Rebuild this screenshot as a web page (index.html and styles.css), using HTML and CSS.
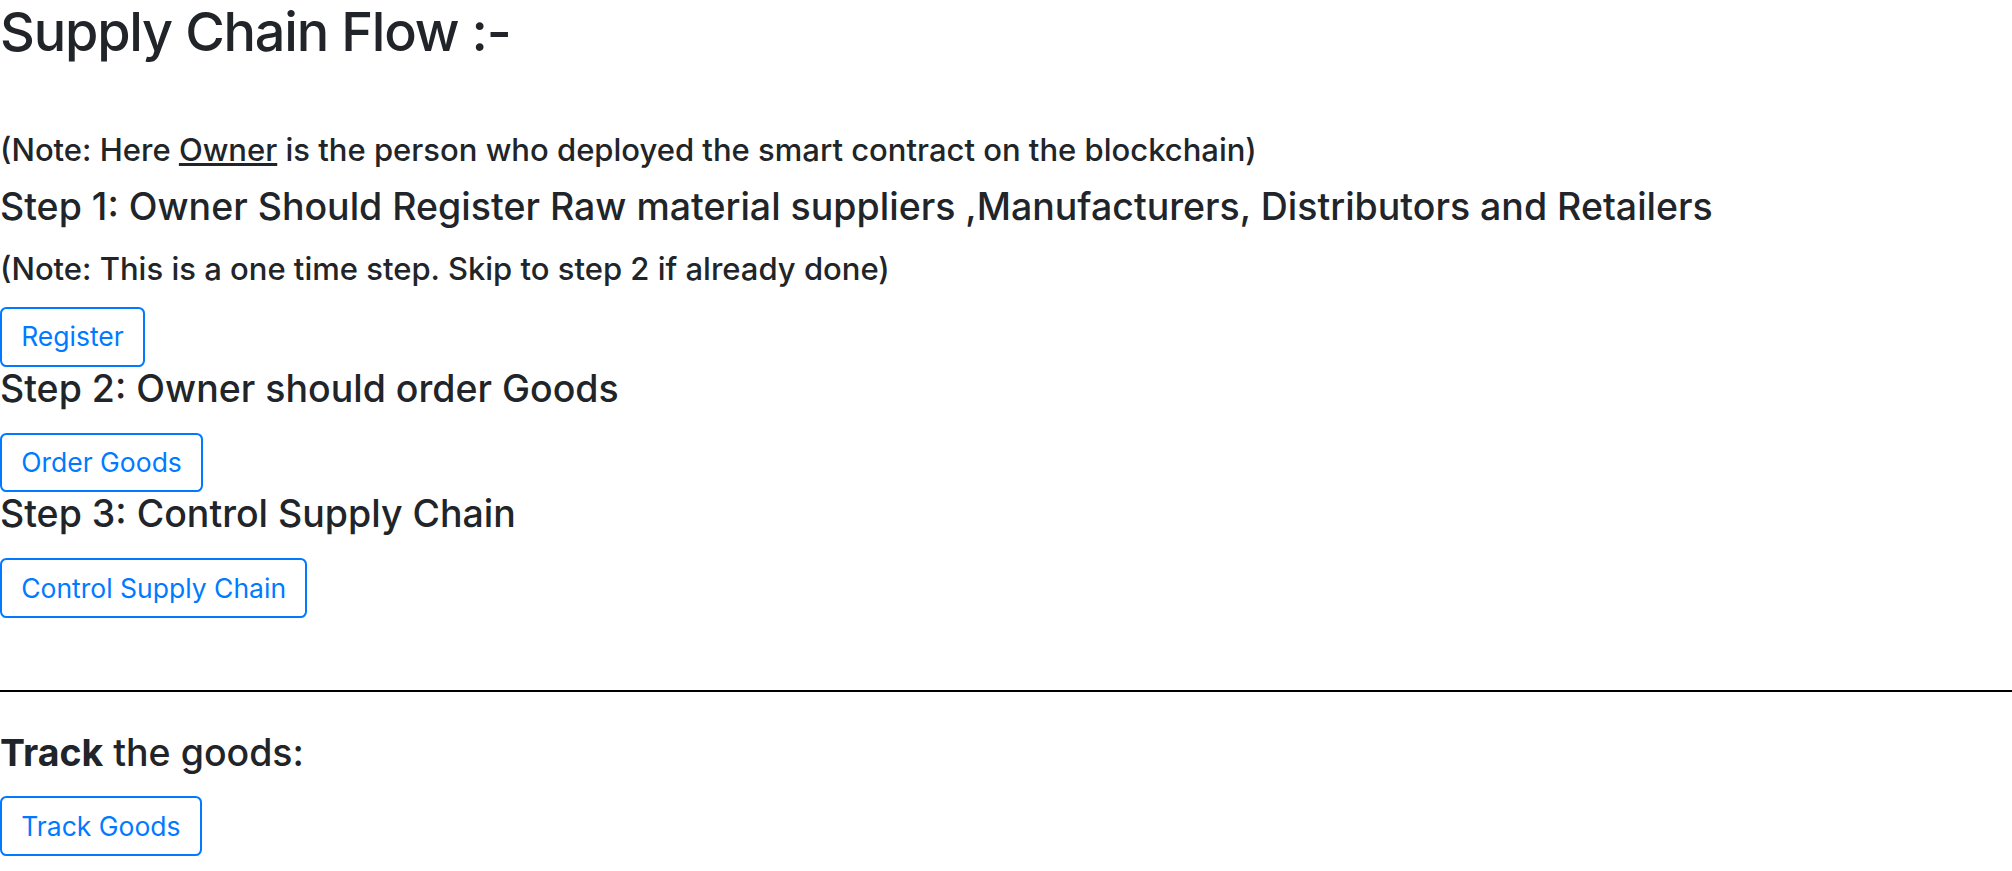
FILE: index.html
```html
<!DOCTYPE html>
<html lang="en">
<head>
    <meta charset="UTF-8">
    <meta name="viewport" content="width=device-width, initial-scale=1.0">
    <title>Supply Chain Flow</title>
    <link rel="stylesheet" href="styles.css">
</head>
<body>
    <div class="flow">
        <h1 class="title">Supply Chain Flow :-</h1>
        <h5 class="note">(Note: Here <u>Owner</u> is the person who deployed the smart contract on the blockchain)</h5>
        <h4 class="step">Step 1: Owner Should Register Raw material suppliers ,Manufacturers, Distributors and Retailers</h4>
        <h5 class="note">(Note: This is a one time step. Skip to step 2 if already done)</h5>
        <button class="btn">Register</button>
        <h4 class="step">Step 2: Owner should order Goods</h4>
        <button class="btn">Order Goods</button>
        <h4 class="step">Step 3: Control Supply Chain</h4>
        <button class="btn">Control Supply Chain</button>
        <hr>
        <h4 class="step"><b>Track</b> the goods:</h4>
        <button class="btn">Track Goods</button>
    </div>
</body>
</html>
```

FILE: styles.css
```css
body {
    margin: 0;
    font-family: Inter, "Noto Sans", sans-serif;
    font-size: 25.6px;
    line-height: 1.5;
    color: #212529;
    background-color: #fff;
}

.flow {
    display: flex;
    flex-direction: column;
    align-items: flex-start;
}

h1, h4, h5 {
    margin: 0;
    font-weight: 500;
    line-height: 1.2;
}

.title {
    font-size: 54px;
    letter-spacing: -1.2px;
    margin-bottom: 66.6px;
}

.step {
    font-size: 37.5px;
    line-height: 1.15;
    margin-bottom: 22.5px;
}

.note {
    font-size: 31px;
    margin-bottom: 16px;
}

.note + .btn {
    margin-top: 3.5px;
}

.step b {
    font-weight: 700;
}

.btn {
    font-family: inherit;
    font-size: 26.5px;
    line-height: 36.8px;
    padding: 9.6px 19.2px;
    color: #007bff;
    background-color: transparent;
    border: 2px solid #007bff;
    border-radius: 6.4px;
    cursor: pointer;
}

hr {
    align-self: stretch;
    margin: 71.5px 0 39px 0;
    border: none;
    border-top: 2px solid #000;
}
```
